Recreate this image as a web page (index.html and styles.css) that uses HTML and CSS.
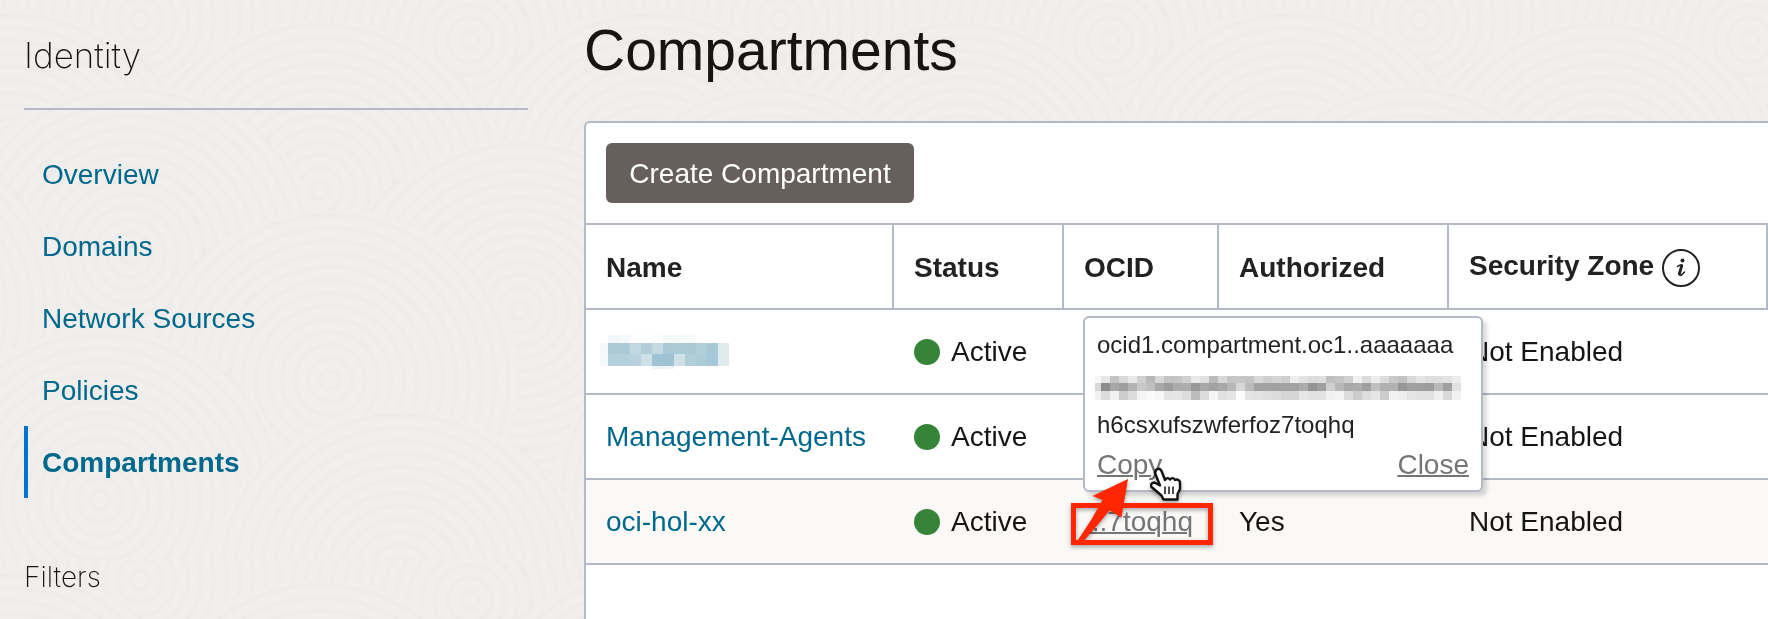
FILE: index.html
```html
<!DOCTYPE html>
<html lang="en">
<head>
<meta charset="utf-8">
<title>Compartments</title>
<link rel="stylesheet" href="styles.css">
</head>
<body>
<svg class="backdrop" aria-hidden="true">
  <defs>
    <radialGradient id="rings" gradientUnits="userSpaceOnUse" cx="0" cy="0" r="13" spreadMethod="repeat">
      <stop offset="0" stop-color="#f0efed"/>
      <stop offset=".4" stop-color="#f0efed"/>
      <stop offset=".7" stop-color="#ecebea"/>
      <stop offset="1" stop-color="#f0efed"/>
    </radialGradient>
    <ellipse id="disc" rx="190" ry="170" fill="url(#rings)"/>
    <pattern id="waves" width="640" height="560" patternUnits="userSpaceOnUse">
      <rect width="640" height="560" fill="#f0efed"/>
      <use href="#disc" x="0" y="-60"/><use href="#disc" x="640" y="-60"/>
      <use href="#disc" x="320" y="-90"/>
      <use href="#disc" x="140" y="20"/>
      <use href="#disc" x="470" y="40"/>
      <use href="#disc" x="-170" y="40"/>
      <use href="#disc" x="10" y="180"/><use href="#disc" x="650" y="180"/>
      <use href="#disc" x="320" y="190"/>
      <use href="#disc" x="130" y="255"/>
      <use href="#disc" x="520" y="310"/>
      <use href="#disc" x="-120" y="310"/>
      <use href="#disc" x="330" y="380"/>
      <use href="#disc" x="100" y="500"/><use href="#disc" x="740" y="500"/>
      <use href="#disc" x="400" y="580"/>
    </pattern>
  </defs>
  <rect width="100%" height="100%" fill="url(#waves)"/>
</svg>
<div class="page">
  <aside class="sidebar">
    <h2 class="sidebar-title">Identity</h2>
    <nav class="nav">
      <a class="nav-link" href="#overview">Overview</a>
      <a class="nav-link" href="#domains">Domains</a>
      <a class="nav-link" href="#network">Network Sources</a>
      <a class="nav-link" href="#policies">Policies</a>
      <a class="nav-link nav-link-active" href="#compartments" aria-current="page">Compartments</a>
    </nav>
    <h3 class="filters-title">Filters</h3>
  </aside>
  <main class="main">
    <h1 class="title">Compartments</h1>
    <section class="panel">
      <div class="toolbar"><button class="create" type="button">Create Compartment</button></div>
      <table class="table">
        <colgroup><col class="col-name"><col class="col-status"><col class="col-ocid"><col class="col-auth"><col></colgroup>
        <thead>
          <tr>
            <th scope="col">Name</th>
            <th scope="col">Status</th>
            <th scope="col">OCID</th>
            <th scope="col">Authorized</th>
            <th scope="col">Security Zone
              <svg class="info" viewBox="0 0 38 38" role="img" aria-label="Information"><circle cx="19" cy="19" r="18" fill="none" stroke="#222" stroke-width="2"/><circle cx="20.500" cy="11.500" r="2" fill="#222"/><path d="M15.500 17.500 Q18 15.500 20 16.500 L17.500 24.500 Q17.200 27 19.500 26 L22.500 23" fill="none" stroke="#222" stroke-width="1.600" stroke-linecap="round"/><path d="M19.800 16.500 L17.300 25" stroke="#222" stroke-width="2.800" stroke-linecap="round"/></svg>
            </th>
          </tr>
        </thead>
        <tbody>
          <tr>
            <td><svg class="masked-name" data-mosaic="name" width="129" height="34" aria-hidden="true"></svg></td>
            <td><span class="status">Active</span></td>
            <td></td>
            <td></td>
            <td>Not Enabled</td>
          </tr>
          <tr>
            <td><a class="name" href="#agents">Management-Agents</a></td>
            <td><span class="status">Active</span></td>
            <td></td>
            <td></td>
            <td>Not Enabled</td>
          </tr>
          <tr class="row-hover">
            <td><a class="name" href="#hol">oci-hol-xx</a></td>
            <td><span class="status">Active</span></td>
            <td>
              <div class="ocid">
                <a class="quiet" href="#ocid">...7toqhq</a>
                <div class="popup">
                  <div class="popup-line">ocid1.compartment.oc1..aaaaaaa</div>
                  <div class="popup-line popup-line-masked"><svg class="masked-ocid" data-mosaic="ocid" width="366" height="24" aria-hidden="true"></svg></div>
                  <div class="popup-line">h6csxufszwferfoz7toqhq</div>
                  <div class="popup-actions"><a class="quiet" href="#copy">Copy</a><a class="quiet" href="#close">Close</a></div>
                </div>
                <svg class="callout" width="160" height="92" viewBox="1066 462 160 92" aria-hidden="true">
                  <rect x="1073.500" y="505.500" width="137" height="37" fill="none" stroke="#ff2600" stroke-width="5"/>
                  <path d="M1128 479 L1121.500 517.500 L1109.500 510.500 Q1097 526 1082 543 L1077 545 L1078 540 Q1092 520 1102.500 500 L1092.500 496 Z" fill="#ff2600"/>
                  <path d="M1156 470 Q1159 467 1161.500 471 L1165 480 Q1167.500 476.500 1170 479.500 Q1173 476.500 1175 480 Q1178.500 478.500 1180 482 V489 L1177.500 494 V499.500 H1163.500 L1161.500 495.500 L1151.500 487 Q1150 482.500 1154.500 482.500 L1160 485.500 L1155 473 Z" fill="#fff" stroke="#111" stroke-width="2.400" stroke-linejoin="round"/>
                  <path d="M1165 486.500 V494 M1169 486.500 V494 M1173 486.500 V494" stroke="#222" stroke-width="1.600"/>
                </svg>
              </div>
            </td>
            <td>Yes</td>
            <td>Not Enabled</td>
          </tr>
        </tbody>
      </table>
    </section>
  </main>
</div>
<script src="mosaic.js"></script>
</body>
</html>
```
FILE: mosaic.js
```js
// Draws the pixelated blocks that hide private values.
const mosaics = {
  name: {
    first: 8, cell: 11, rows: [8, 11, 12, 3],
    colors: [
      'fff f1f8fb f4f9fb fdfdfd fdfdfd fcfcfc f4f9f9 f4f9f9 f7fafa fff fff fff',
      'f2f8fb abc9d7 aacad7 c0d8e1 b2cfd9 c6dbe1 a8c9d5 a9cad6 a9c9d5 b1ced9 a8c8d6 e0ebf0',
      'f4f9fb b4d1db b5d2dc b9d2de cfe1e8 a1c4d4 9fc3d2 d0e2e8 b1cfd9 acccd8 a7c8d8 e0ebf0',
      'fff fff fff fff fff edf4f8 f0f6f8 fff fff fff fff fff'
    ]
  },
  ocid: {
    first: 6, cell: 9, rows: [7, 8, 9],
    colors: [
      'f8 e8 c4 d8 e8 d0 b8 d8 c4 c6 d0 e8 e0 bc d8 c6 c6 c4 d8 d0 d4 ce ee e2 dc de c0 c6 d0 f0 da ec dc c8 c2 d8 e4 de de e2 ec',
      'd8 8c a6 9f b2 c8 c0 a8 9c ac ac 98 a8 a2 a8 b8 d8 bc a2 a2 a2 a2 a2 ac 94 a0 cf b8 a8 ac 9f c0 b0 b2 96 a0 9f 9c b8 a0 e0',
      'f0 dc f0 cc dc f4 fa f6 e4 e6 dc bc dc f6 e0 e6 fc e4 e2 de dc d6 d6 e6 e2 e2 f0 f4 dc cc dc e4 cc f2 ee e4 e2 e2 f0 d8 f2'
    ]
  }
};
document.querySelectorAll('[data-mosaic]').forEach(svg => {
  const m = mosaics[svg.dataset.mosaic];
  let y = 0;
  m.colors.forEach((line, r) => {
    let x = 0;
    line.split(' ').forEach((c, i) => {
      const w = i === 0 ? m.first : m.cell;
      const rect = document.createElementNS('http://www.w3.org/2000/svg', 'rect');
      rect.setAttribute('x', x);
      rect.setAttribute('y', y);
      rect.setAttribute('width', w);
      rect.setAttribute('height', m.rows[r]);
      rect.setAttribute('fill', '#' + (c.length === 2 ? c.repeat(3) : c));
      svg.appendChild(rect);
      x += w;
    });
    y += m.rows[r];
  });
});
```
FILE: styles.css
```css
* { box-sizing: border-box; }
body {
  margin: 0;
  background: #f0efed;
  color: #161513;
  font-family: "Liberation Sans", Arial, sans-serif;
  font-size: 28px;
  line-height: 32px;
}
a { text-decoration: none; }
.backdrop {
  position: fixed;
  inset: 0;
  width: 100%;
  height: 100%;
  z-index: -1;
}
.page {
  display: grid;
  grid-template-columns: 504px minmax(0, 1fr);
  column-gap: 56px;
  min-height: 100vh;
  padding-left: 24px;
}
.sidebar-title {
  margin: 0 0 28px;
  padding: 32px 0 30px;
  border-bottom: 2px solid #b3b9c5;
  font-family: Inter, sans-serif;
  font-size: 35px;
  font-weight: 200;
  line-height: 46px;
}
.nav { display: flex; flex-direction: column; }
.nav-link {
  padding: 21px 14px 19px;
  border-left: 4px solid transparent;
  color: #00688c;
}
.nav-link-active { border-left-color: #0572ce; font-weight: 700; }
.filters-title {
  margin: 59px 0 0;
  font-family: Inter, sans-serif;
  font-size: 28px;
  font-weight: 200;
  line-height: 40px;
}
.main { display: flex; flex-direction: column; }
.title {
  margin: 0;
  padding: 18px 0 39px;
  font-size: 57px;
  font-weight: 400;
  line-height: 64px;
}
.panel {
  flex: 1;
  border: solid #b3b9c5;
  border-width: 2px 0 0 2px;
  border-top-left-radius: 6px;
  background: #fff;
}
.toolbar { padding: 20px; }
.create {
  display: block;
  min-width: 308px;
  height: 60px;
  padding: 2px 22px 0;
  border: 0;
  border-radius: 6px;
  background: #665f5b;
  color: #fff;
  font: inherit;
}
.table {
  width: 100%;
  table-layout: fixed;
  border-collapse: separate;
  border-spacing: 0;
  border-top: 2px solid #b3b9c5;
}
.col-name { width: 308px; }
.col-status { width: 170px; }
.col-ocid { width: 155px; }
.col-auth { width: 230px; }
th, td {
  height: 85px;
  padding: 0 0 0 20px;
  border-bottom: 2px solid #b3b9c5;
  text-align: left;
  vertical-align: middle;
  white-space: nowrap;
}
th {
  padding-top: 2px;
  border-right: 2px solid #b3b9c5;
  color: #222;
}
.info { width: 38px; height: 38px; vertical-align: middle; }
.row-hover { background: #faf9f8; }
.name { color: #00688c; }
.masked-name { display: block; margin-left: -6px; }
.status { display: flex; align-items: center; gap: 11px; }
.status::before {
  content: "";
  width: 26px;
  height: 26px;
  border-radius: 50%;
  background: #358438;
}
.quiet {
  color: #757575;
  text-decoration: underline;
  text-decoration-thickness: 2px;
}
.ocid { position: relative; }
.popup {
  position: absolute;
  left: -1px;
  bottom: 46px;
  width: 400px;
  padding: 7px 12px 5px;
  border: 2px solid #b3b9c5;
  border-radius: 6px;
  background: #fff;
  box-shadow: 4px 4px 4px rgba(0, 0, 0, .15);
  line-height: 40px;
}
.popup-line { height: 40px; color: #222; font-size: 24px; }
.popup-line-masked { padding-top: 11px; }
.popup-actions { display: flex; justify-content: space-between; }
.masked-ocid { display: block; margin: 0 -2px; }
.callout {
  position: absolute;
  left: -18px;
  top: -44px;
  filter: drop-shadow(0 2px 2px rgba(0, 0, 0, .35));
  pointer-events: none;
}
```
